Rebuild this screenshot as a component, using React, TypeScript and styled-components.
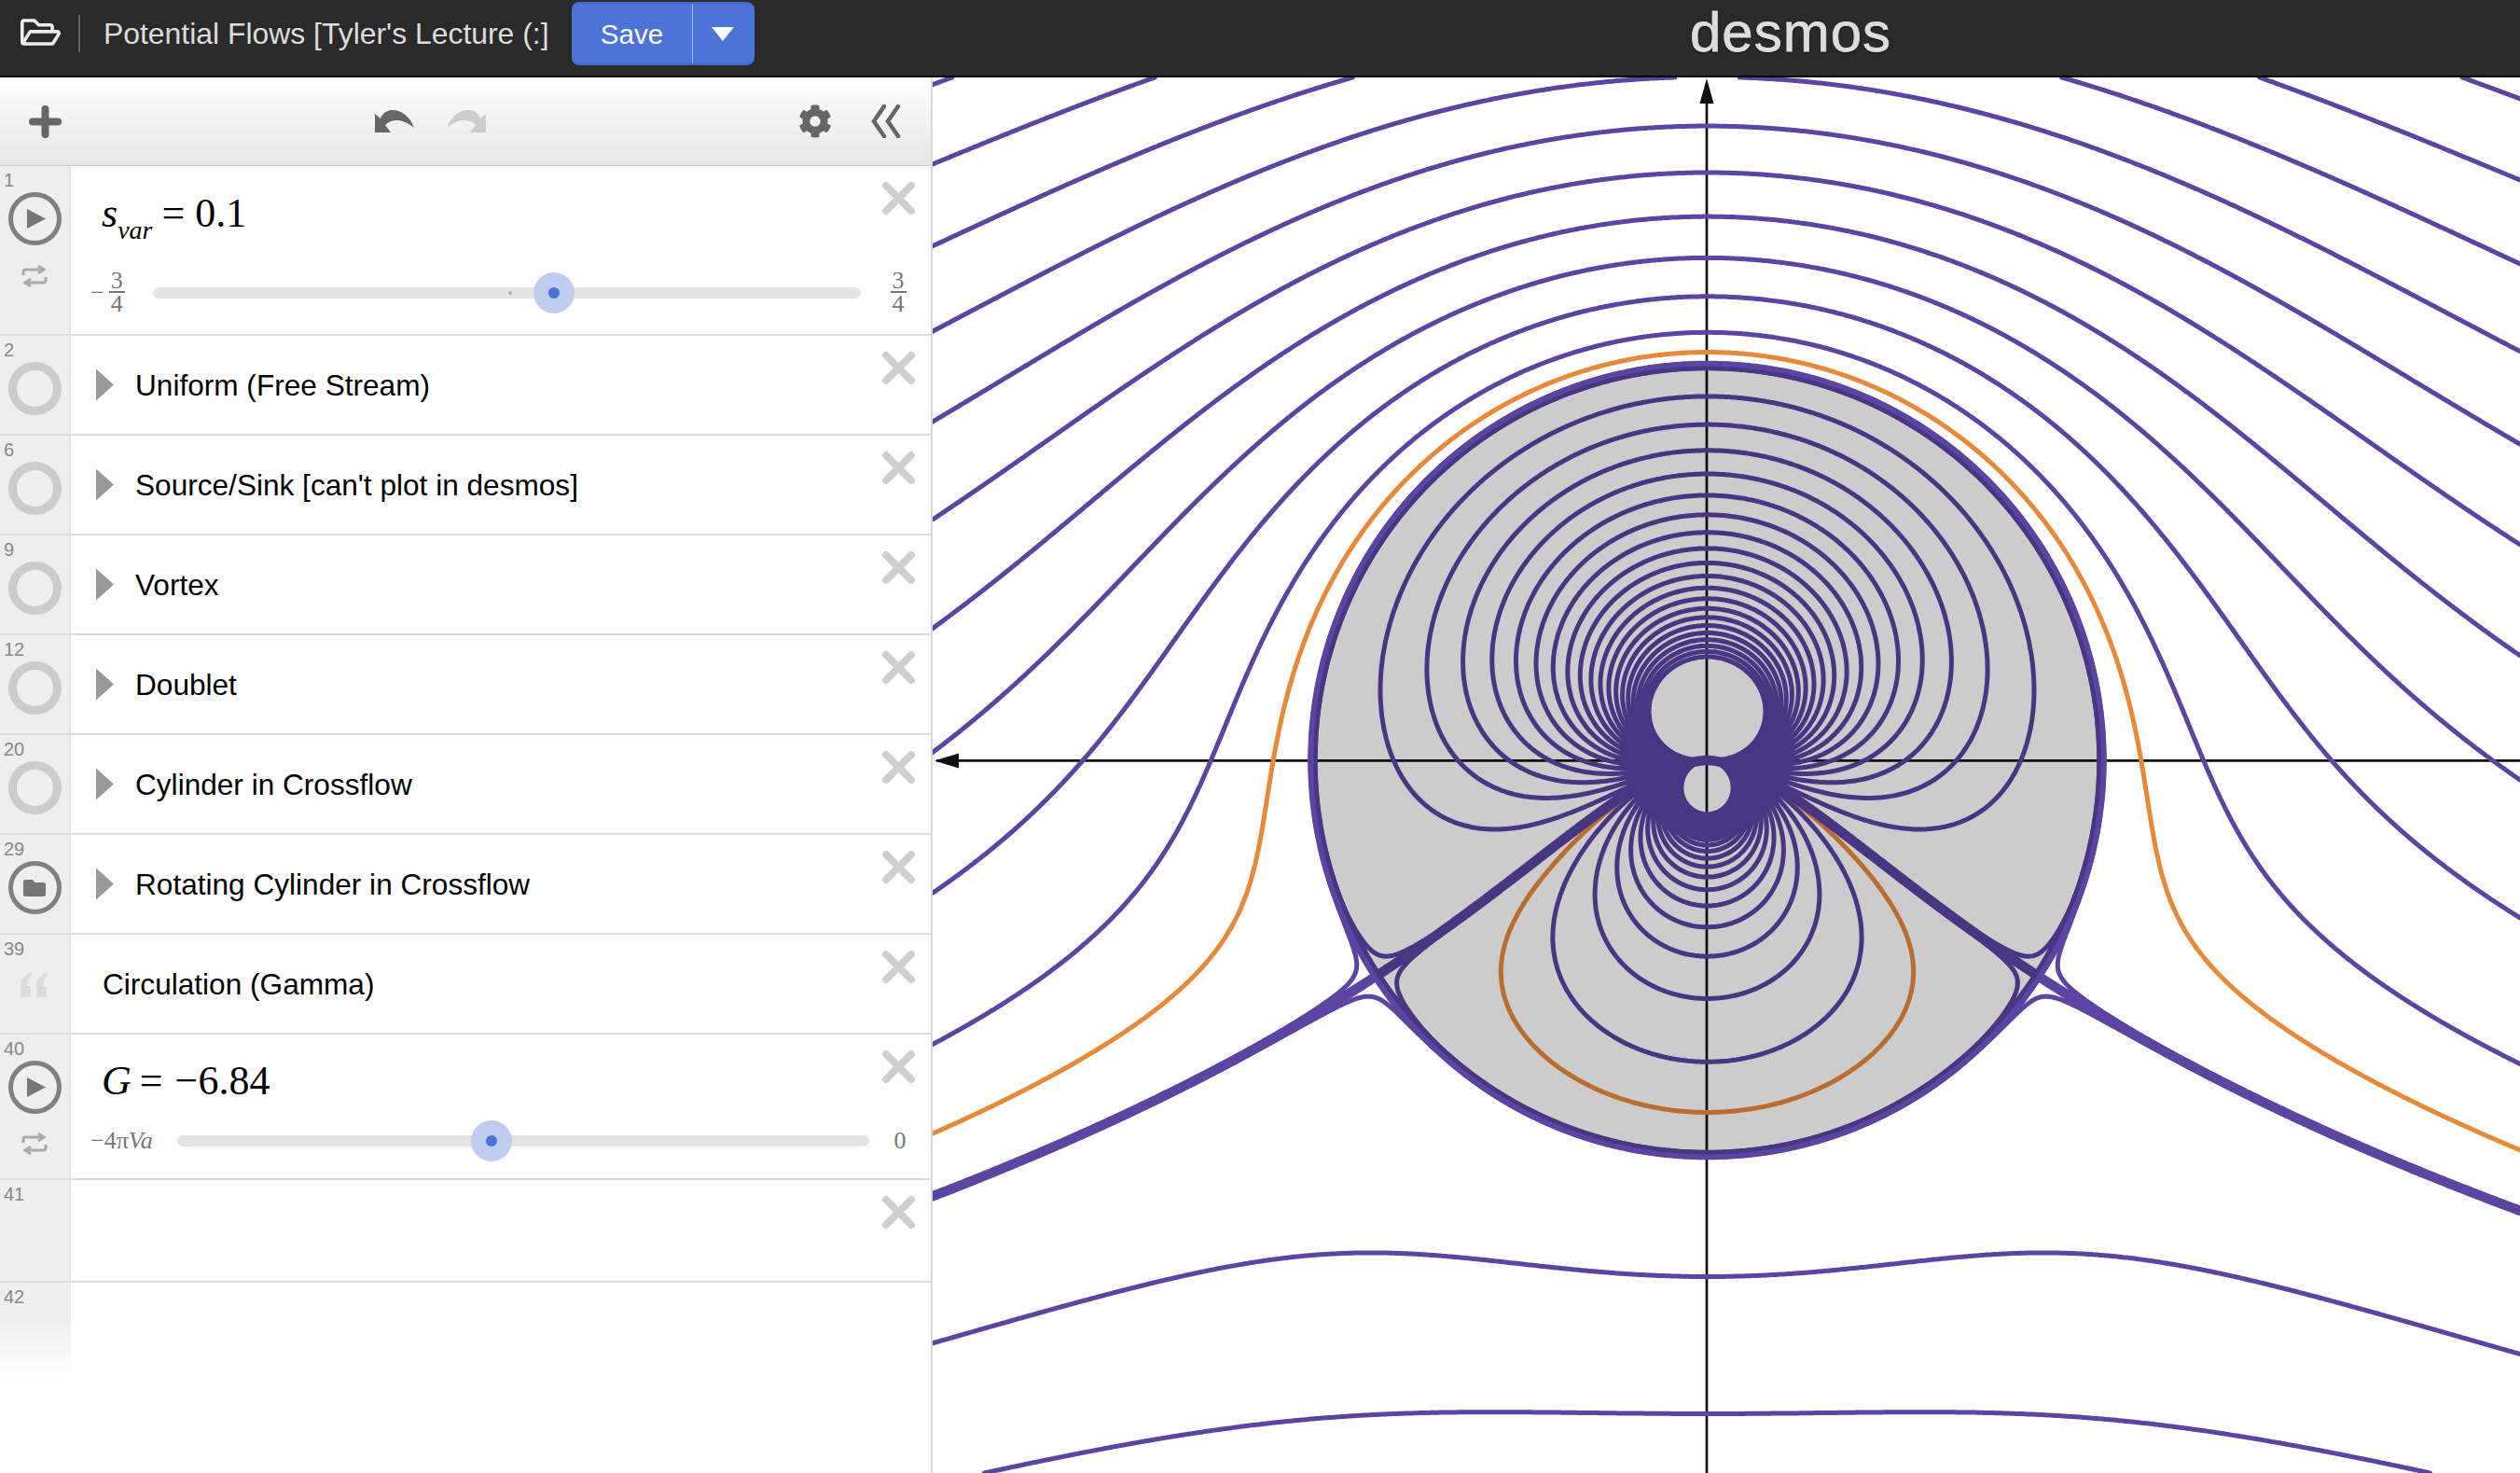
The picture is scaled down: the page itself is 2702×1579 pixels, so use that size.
import React, { useMemo } from 'react';
import styled, { createGlobalStyle } from 'styled-components';
import { FaCog, FaFolder, FaRegFolderOpen } from 'react-icons/fa';

// Stream function of a rotating cylinder in crossflow, everything in screen pixels
const GRAPH_W = 1702;
const GRAPH_H = 1496;
const CX = 830.5;
const CY = 732;
const RADIUS = 423;
const GAMMA = 462;
const LEVEL_STEP = 106;
const GRID = 2;

const psi = (x: number, y: number) => {
  const r2 = x * x + y * y + 1e-6;
  return y * (1 - (RADIUS * RADIUS) / r2) + GAMMA * 0.5 * Math.log(r2 / (RADIUS * RADIUS));
};

const contour = (levels: number[]) => {
  const cols = Math.ceil(GRAPH_W / GRID) + 1;
  const rows = Math.ceil(GRAPH_H / GRID) + 1;
  const field = new Float64Array(cols * rows);
  for (let j = 0; j < rows; j++) {
    for (let i = 0; i < cols; i++) {
      field[j * cols + i] = psi(i * GRID - CX, CY - j * GRID);
    }
  }
  const out: string[] = [];
  const pts: number[] = [];
  for (let j = 0; j < rows - 1; j++) {
    for (let i = 0; i < cols - 1; i++) {
      const a = field[j * cols + i];
      const b = field[j * cols + i + 1];
      const c = field[(j + 1) * cols + i + 1];
      const d = field[(j + 1) * cols + i];
      const lo = Math.min(a, b, c, d);
      const hi = Math.max(a, b, c, d);
      for (const l of levels) {
        if (l < lo || l >= hi) continue;
        pts.length = 0;
        const x = i * GRID;
        const y = j * GRID;
        if (a < l !== b < l) pts.push(x + (GRID * (l - a)) / (b - a), y);
        if (b < l !== c < l) pts.push(x + GRID, y + (GRID * (l - b)) / (c - b));
        if (c < l !== d < l) pts.push(x + (GRID * (l - d)) / (c - d), y + GRID);
        if (d < l !== a < l) pts.push(x, y + (GRID * (l - a)) / (d - a));
        for (let p = 0; p + 3 < pts.length; p += 4) {
          out.push(`M${pts[p].toFixed(1)} ${pts[p + 1].toFixed(1)}L${pts[p + 2].toFixed(1)} ${pts[p + 3].toFixed(1)}`);
        }
      }
    }
  }
  return out.join('');
};

const PlotLine = styled.path<{ $color: string; $width: number }>`
  fill: none;
  stroke: ${(p) => p.$color};
  stroke-width: ${(p) => p.$width}px;
  stroke-linecap: round;
`;

const Graph = () => {
  const paths = useMemo(() => {
    const purple = [1, -1];
    for (let k = -20; k <= 20; k++) if (k !== 0) purple.push(k * LEVEL_STEP);
    return { purple: contour(purple), divider: contour([0]), orange: contour([44]) };
  }, []);

  return (
    <GraphPane>
      <GraphSvg viewBox={`0 0 ${GRAPH_W} ${GRAPH_H}`}>
        <line x1="4" y1={CY + 0.4} x2={GRAPH_W} y2={CY + 0.4} stroke="#111" strokeWidth="2.7" />
        <line x1={CX - 0.5} y1="10" x2={CX - 0.5} y2={GRAPH_H} stroke="#111" strokeWidth="2.7" />
        <polygon points={`${CX - 8},28 ${CX - 0.5},1 ${CX + 7},28`} fill="#111" />
        <polygon points={`28,${CY - 7.5} 2,${CY + 0.4} 28,${CY + 8.5}`} fill="#111" />
        <PlotLine d={paths.purple} $color="#5c44a3" $width={5} />
        <PlotLine d={paths.orange} $color="#e8893a" $width={5} />
        <PlotLine d={paths.divider} $color="#5c44a3" $width={10.5} />
        <circle cx={CX} cy={CY} r={RADIUS} fill="none" stroke="#5c44a3" strokeWidth="10" />
        <circle cx={CX} cy={CY} r={RADIUS - 0.5} fill="#000" fillOpacity="0.2" />
      </GraphSvg>
    </GraphPane>
  );
};

const LoopIcon = () => (
  <svg width="28" height="24" viewBox="0 0 28 24" fill="none" stroke="#aaa" strokeWidth="3">
    <path d="M2 11V7.5Q2 5 4.5 5H23" />
    <path d="M18 1L24 5L18 9" />
    <path d="M26 13V16.5Q26 19 23.5 19H5" />
    <path d="M10 15L4 19L10 23" />
  </svg>
);

const QuoteIcon = () => (
  <svg width="29" height="27" viewBox="0 0 29 27" fill="#dcdcdc">
    <path d="M11 0C4 4 0 9 0 15V27H11V15H7C7 10 9 6 12 3Z" />
    <path d="M28 0C21 4 17 9 17 15V27H28V15H24C24 10 26 6 29 3Z" />
  </svg>
);

const DeleteIcon = () => (
  <svg width="37" height="37" viewBox="0 0 37 37" fill="none" stroke="#cfcfcf" strokeWidth="8" strokeLinecap="round">
    <path d="M5 5L32 32M32 5L5 32" />
  </svg>
);

type FolderRow = { line: number; title: string; kind: 'hidden' | 'folder' };
const folders: FolderRow[] = [
  { line: 2, title: 'Uniform (Free Stream)', kind: 'hidden' },
  { line: 6, title: "Source/Sink [can't plot in desmos]", kind: 'hidden' },
  { line: 9, title: 'Vortex', kind: 'hidden' },
  { line: 12, title: 'Doublet', kind: 'hidden' },
  { line: 20, title: 'Cylinder in Crossflow', kind: 'hidden' },
  { line: 29, title: 'Rotating Cylinder in Crossflow', kind: 'folder' },
];

const App = () => (
  <Page>
    <GlobalStyle />
    <Header>
      <FolderButton>
        <FaRegFolderOpen size={43} />
      </FolderButton>
      <HeaderDivider />
      <GraphTitle>Potential Flows [Tyler's Lecture (:]</GraphTitle>
      <SaveButton>
        <SaveLabel>Save</SaveLabel>
        <SaveCaret />
      </SaveButton>
      <Logo>desmos</Logo>
    </Header>
    <Body>
      <Sidebar>
        <Toolbar>
          <svg width="35" height="35" viewBox="0 0 35 35" stroke="#666" strokeWidth="8" strokeLinecap="round">
            <path d="M17.5 4V31M4 17.5H31" />
          </svg>
          <ToolGroup $gap={33}>
            <svg width="43" height="24" viewBox="0 0 43 24" fill="#666">
              <path d="M0 4V24H17L11 16C18 9 30 9 42 19C38 7 28 0 19 0C14 0 9 2 6 9Z" />
            </svg>
            <svg width="43" height="24" viewBox="0 0 43 24" fill="#ccc">
              <path d="M43 4V24H26L32 16C25 9 13 9 1 19C5 7 15 0 24 0C29 0 34 2 37 9Z" />
            </svg>
          </ToolGroup>
          <ToolGroup $gap={42}>
            <FaCog size={36} color="#666" />
            <svg width="32" height="36" viewBox="0 0 32 36" fill="none" stroke="#666" strokeWidth="4.5" strokeLinecap="round">
              <path d="M14 2L3 18L14 34M29 2L18 18L29 34" />
            </svg>
          </ToolGroup>
        </Toolbar>

        <Row $height={182}>
          <Gutter>
            <LineNumber>1</LineNumber>
            <PlayCircle />
            <LoopSlot $top={21}>
              <LoopIcon />
            </LoopSlot>
          </Gutter>
          <Expression>
            <MathLine $top={28}>
              <MathVar>s</MathVar>
              <MathSub>var</MathSub>
              <MathOp $left={10} $right={11}>=</MathOp>0.1
            </MathLine>
            <SliderLine $top={39}>
              <Limit $width={67}>
                <span>−</span>
                <Frac>
                  <FracTop>3</FracTop>
                  <FracBottom>4</FracBottom>
                </Frac>
              </Limit>
              <Slider value={56.7} tick={50.2} />
              <Limit $width={75} $end>
                <Frac>
                  <FracTop>3</FracTop>
                  <FracBottom>4</FracBottom>
                </Frac>
              </Limit>
            </SliderLine>
          </Expression>
          <DeleteSlot>
            <DeleteIcon />
          </DeleteSlot>
        </Row>

        {folders.map((f) => (
          <Row $height={107} key={f.line}>
            <Gutter>
              <LineNumber>{f.line}</LineNumber>
              {f.kind === 'hidden' ? (
                <HiddenCircle />
              ) : (
                <FolderCircle>
                  <FaFolder size={24} color="#777" />
                </FolderCircle>
              )}
            </Gutter>
            <FolderBody>
              <FolderCaret />
              <RowTitle>{f.title}</RowTitle>
            </FolderBody>
            <DeleteSlot>
              <DeleteIcon />
            </DeleteSlot>
          </Row>
        ))}

        <Row $height={107}>
          <Gutter>
            <LineNumber>39</LineNumber>
            <QuoteSlot>
              <QuoteIcon />
            </QuoteSlot>
          </Gutter>
          <NoteBody>
            <RowTitle>Circulation (Gamma)</RowTitle>
          </NoteBody>
          <DeleteSlot>
            <DeleteIcon />
          </DeleteSlot>
        </Row>

        <Row $height={156}>
          <Gutter>
            <LineNumber>40</LineNumber>
            <PlayCircle />
            <LoopSlot $top={20}>
              <LoopIcon />
            </LoopSlot>
          </Gutter>
          <Expression>
            <MathLine $top={27}>
              <MathVar>G</MathVar>
              <MathOp $left={9} $right={13}>=</MathOp>−6.84
            </MathLine>
            <SliderLine $top={18}>
              <Limit $width={93}>
                −4π<em>Va</em>
              </Limit>
              <Slider value={45.4} />
              <Limit $width={66} $end>
                0
              </Limit>
            </SliderLine>
          </Expression>
          <DeleteSlot>
            <DeleteIcon />
          </DeleteSlot>
        </Row>

        <Row $height={110}>
          <Gutter>
            <LineNumber>41</LineNumber>
          </Gutter>
          <DeleteSlot>
            <DeleteIcon />
          </DeleteSlot>
        </Row>

        <LastRow>
          <FadingGutter>
            <LineNumber>42</LineNumber>
          </FadingGutter>
        </LastRow>
      </Sidebar>
      <Graph />
    </Body>
  </Page>
);

const Slider = ({ value, tick }: { value: number; tick?: number }) => (
  <Track>
    {tick !== undefined && <TrackTick style={{ left: `${tick}%` }} />}
    <Thumb style={{ left: `${value}%` }}>
      <ThumbDot />
    </Thumb>
  </Track>
);

export default App;

const GlobalStyle = createGlobalStyle`
  html, body {
    margin: 0;
    padding: 0;
    background: #fff;
  }
`;

const Page = styled.div`
  width: 2702px;
  height: 1579px;
  display: flex;
  flex-direction: column;
  overflow: hidden;
  font-family: 'Liberation Sans', Arial, sans-serif;
`;

const Header = styled.div`
  height: 83px;
  box-sizing: border-box;
  flex: none;
  display: flex;
  align-items: flex-start;
  background: #2a2a2a;
  border-bottom: 2px solid #000;
  padding-left: 22px;
`;

const FolderButton = styled.div`
  color: #eee;
  height: 43px;
  margin-top: 13px;
  display: flex;
`;

const HeaderDivider = styled.div`
  width: 2px;
  height: 40px;
  margin: 16px 25px 0 19px;
  background: #666;
`;

const GraphTitle = styled.div`
  color: #ddd;
  font-size: 31.9px;
  line-height: 72px;
  white-space: nowrap;
  width: 502px;
`;

const SaveButton = styled.div`
  width: 196px;
  height: 68px;
  margin-top: 2px;
  box-sizing: border-box;
  display: flex;
  background: #4d73d8;
  border-top: 2px solid #4267cb;
  border-bottom: 2px solid #4267cb;
  border-radius: 8px;
`;

const SaveLabel = styled.div`
  width: 129px;
  color: #fff;
  font-size: 29.6px;
  line-height: 66px;
  text-align: center;
  border-right: 1px solid #a5b8ea;
`;

const SaveCaret = styled.div`
  width: 24px;
  height: 15px;
  margin: 25px 0 0 20px;
  background: #fff;
  clip-path: polygon(0 0, 100% 0, 50% 100%);
`;

const Logo = styled.div`
  margin-left: 1003px;
  color: #ddd;
  font-family: 'Liberation Sans', Arial, sans-serif;
  font-size: 60px;
  line-height: 69px;
  letter-spacing: 1px;
  -webkit-text-stroke: 0.8px #ddd;
  text-shadow: 0 1px 2px #000;
`;

const Body = styled.div`
  flex: 1;
  display: flex;
  min-height: 0;
`;

const Sidebar = styled.div`
  width: 1000px;
  flex: none;
  box-sizing: border-box;
  border-right: 2px solid #d9d9d9;
  background: #fff;
  display: flex;
  flex-direction: column;
`;

const Toolbar = styled.div`
  height: 95px;
  flex: none;
  box-sizing: border-box;
  display: flex;
  align-items: center;
  justify-content: space-between;
  padding: 0 32px 0 31px;
  background: linear-gradient(#fff, #e6e6e6);
  border-bottom: 1px solid #ccc;
`;

const ToolGroup = styled.div<{ $gap: number }>`
  display: flex;
  align-items: center;
  gap: ${(p) => p.$gap}px;
`;

const Row = styled.div<{ $height: number }>`
  position: relative;
  height: ${(p) => p.$height}px;
  flex: none;
  box-sizing: border-box;
  display: flex;
  border-bottom: 2px solid #ddd;
`;

const LastRow = styled.div`
  height: 103px;
  flex: none;
  display: flex;
`;

const Gutter = styled.div`
  width: 76px;
  flex: none;
  box-sizing: border-box;
  padding: 5px 0 0 0;
  background: #eee;
  border-right: 2px solid #e2e2e2;
`;

const FadingGutter = styled(Gutter)`
  background: linear-gradient(#eee 35%, #fff 100%);
  border-right: 2px solid transparent;
`;

const LineNumber = styled.div`
  font-size: 20px;
  line-height: 20px;
  color: #888;
  padding-left: 4px;
  height: 23px;
`;

const CircleBase = styled.div`
  width: 57px;
  height: 57px;
  margin-left: 8.5px;
  box-sizing: border-box;
  border-radius: 50%;
  display: flex;
  align-items: center;
  justify-content: center;
`;

const PlayCircle = styled(CircleBase)`
  border: 5px solid #808080;
  &::after {
    content: '';
    width: 20px;
    height: 21px;
    margin-left: 4px;
    background: #777;
    clip-path: polygon(0 0, 100% 50%, 0 100%);
  }
`;

const HiddenCircle = styled(CircleBase)`
  border: 9px solid #ccc;
  background: #efefef;
`;

const FolderCircle = styled(CircleBase)`
  border: 5px solid #808080;
`;

const LoopSlot = styled.div<{ $top: number }>`
  display: flex;
  justify-content: center;
  padding-right: 1px;
  margin-top: ${(p) => p.$top}px;
`;

const QuoteSlot = styled.div`
  display: flex;
  justify-content: center;
  margin-top: 12px;
  padding-right: 2px;
`;

const Expression = styled.div`
  flex: 1;
  min-width: 0;
  padding-left: 21px;
`;

const MathLine = styled.div<{ $top: number }>`
  padding: ${(p) => p.$top}px 0 0 12px;
  height: 46px;
  display: flex;
  align-items: baseline;
  font-family: 'Liberation Serif', 'Times New Roman', serif;
  font-size: 44px;
  line-height: 46px;
  color: #000;
`;

const MathVar = styled.span`
  font-style: italic;
`;

const MathSub = styled.span`
  font-style: italic;
  font-size: 28px;
  position: relative;
  top: 13px;
`;

const MathOp = styled.span<{ $left: number; $right: number }>`
  margin: 0 ${(p) => p.$right}px 0 ${(p) => p.$left}px;
`;

const SliderLine = styled.div<{ $top: number }>`
  display: flex;
  align-items: center;
  height: 46px;
  margin-top: ${(p) => p.$top}px;
`;

const Limit = styled.div<{ $width: number; $end?: boolean }>`
  width: ${(p) => p.$width}px;
  flex: none;
  box-sizing: border-box;
  display: flex;
  align-items: center;
  justify-content: ${(p) => (p.$end ? 'center' : 'flex-start')};
  font-family: 'Liberation Serif', 'Times New Roman', serif;
  font-size: 26px;
  color: #777;
  em {
    font-style: italic;
  }
`;

const Frac = styled.div`
  display: flex;
  flex-direction: column;
  align-items: center;
  margin-left: 5px;
`;

const FracTop = styled.div`
  line-height: 22px;
  padding: 0 2px;
  border-bottom: 2px solid #777;
`;

const FracBottom = styled.div`
  line-height: 24px;
`;

const Track = styled.div`
  position: relative;
  flex: 1;
  height: 12px;
  border-radius: 6px;
  background: #e4e4e4;
`;

const TrackTick = styled.div`
  position: absolute;
  top: 4px;
  width: 4px;
  height: 4px;
  border-radius: 50%;
  background: #aaa;
`;

const Thumb = styled.div`
  position: absolute;
  top: -16px;
  width: 44px;
  height: 44px;
  margin-left: -22px;
  border-radius: 50%;
  background: #bfcdf0;
  display: flex;
  align-items: center;
  justify-content: center;
`;

const ThumbDot = styled.div`
  width: 12px;
  height: 12px;
  border-radius: 50%;
  background: #4a72d8;
`;

const DeleteSlot = styled.div`
  position: absolute;
  top: 16px;
  right: 16px;
  height: 37px;
`;

const FolderBody = styled.div`
  flex: 1;
  display: flex;
  align-items: center;
  padding-left: 27px;
`;

const FolderCaret = styled.div`
  width: 19px;
  height: 34px;
  background: #999;
  clip-path: polygon(0 0, 100% 50%, 0 100%);
`;

const NoteBody = styled.div`
  flex: 1;
  display: flex;
  align-items: center;
  padding-left: 34px;
`;

const RowTitle = styled.div`
  font-size: 31.6px;
  color: #000;
  line-height: 40px;
  white-space: nowrap;
  ${FolderCaret} + & {
    margin-left: 23px;
  }
`;

const GraphPane = styled.div`
  flex: 1;
  min-width: 0;
  background: #fff;
  display: flex;
`;

const GraphSvg = styled.svg`
  width: ${GRAPH_W}px;
  height: ${GRAPH_H}px;
  display: block;
`;
